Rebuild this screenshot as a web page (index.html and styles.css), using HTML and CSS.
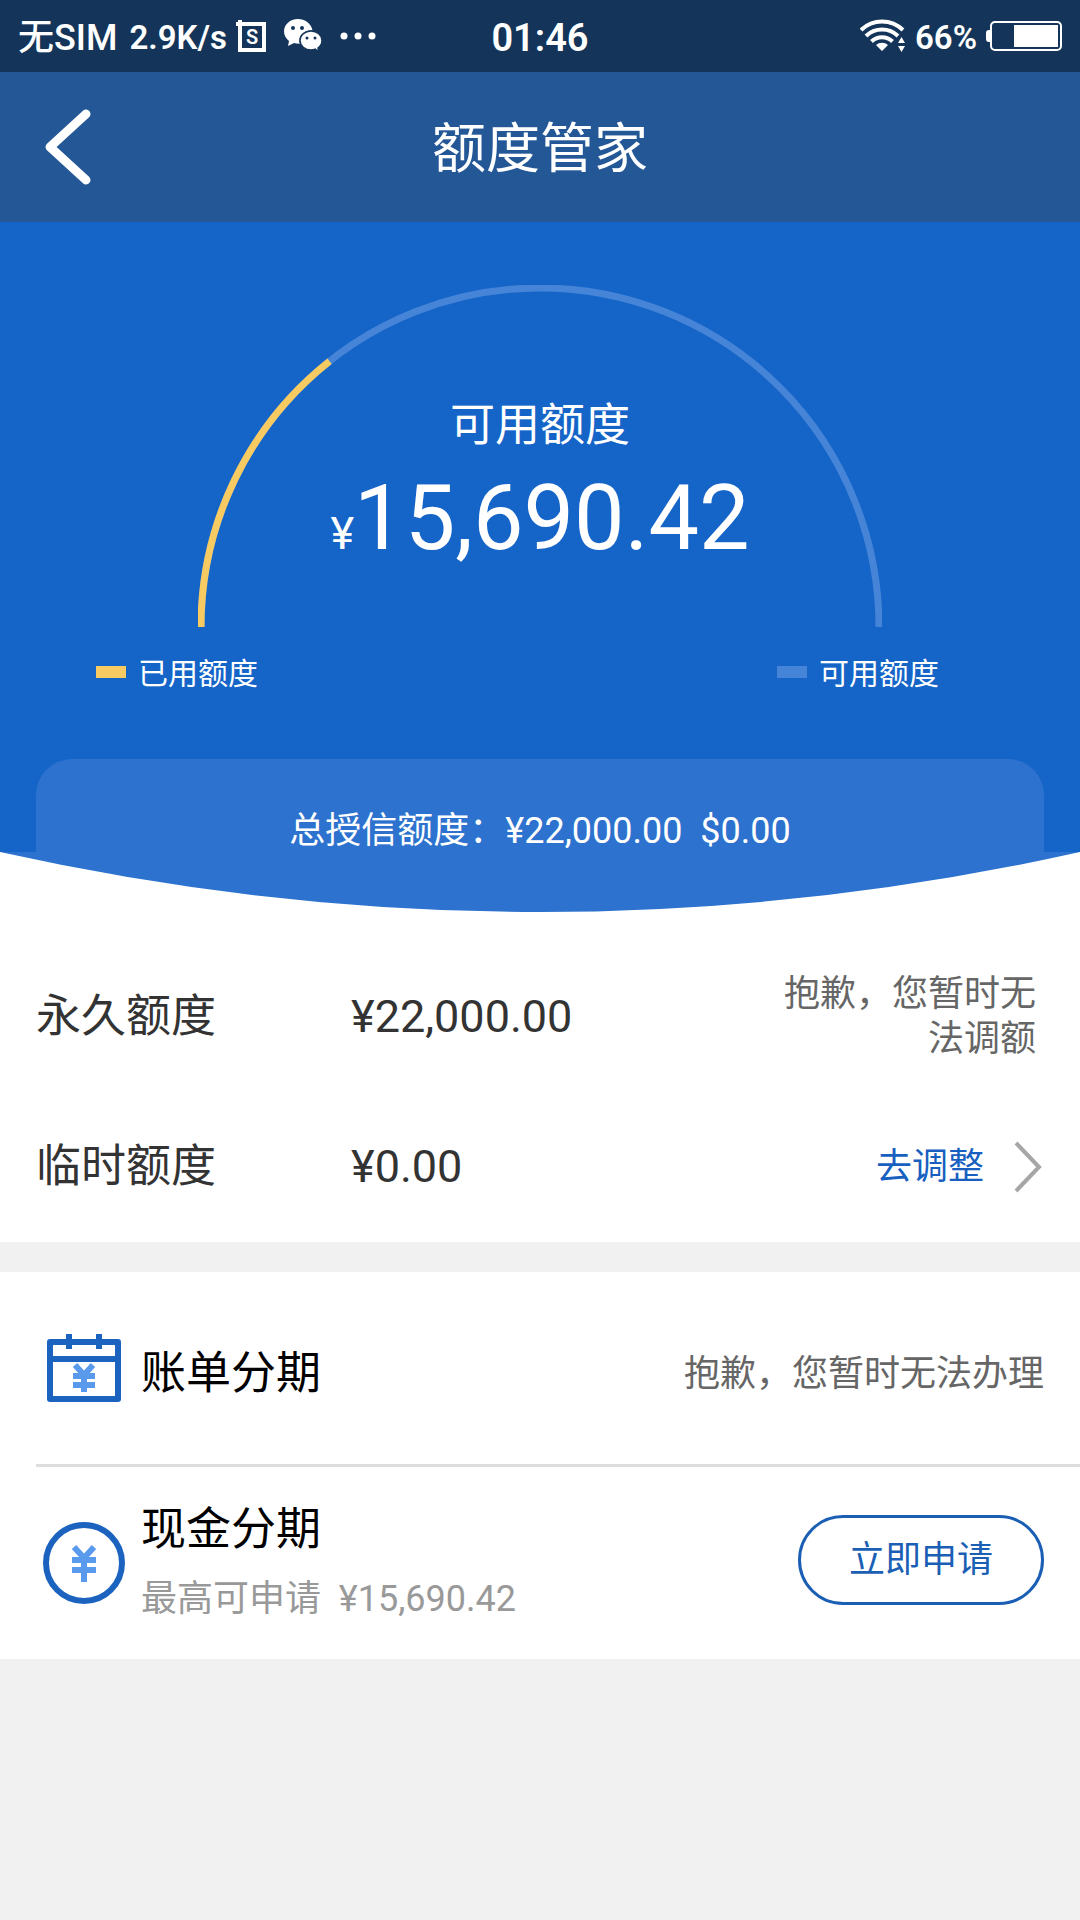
FILE: index.html
```html
<!DOCTYPE html>
<html lang="zh-CN">
<head>
<meta charset="utf-8">
<meta name="viewport" content="width=device-width">
<title>额度管家</title>
<link rel="stylesheet" href="styles.css">
</head>
<body>
<div class="status">
  <div class="status-side">
    <span class="carrier">无SIM</span>
    <span class="speed">2.9K/s</span>
    <svg class="icon-box" width="30" height="32" viewBox="0 0 30 32" aria-hidden="true">
      <path d="M4 0v4M0 4h28v26H4V2" fill="none" stroke="#fff" stroke-width="4"/>
      <text x="16" y="24" text-anchor="middle" class="box-letter">S</text>
    </svg>
    <svg class="icon-chat" width="38" height="34" viewBox="0 0 38 34" aria-hidden="true">
      <path fill="#fff" d="M14 0C6 0 0 5.500 0 12.500c0 4 2 7 5 9.500L4 27l6-3c2 .6 4 .8 6 .7-2.500-8 4-14 12.500-13.500C27 4.500 21 0 14 0z"/>
      <path fill="#fff" stroke="#143559" stroke-width="1.500" d="M27 12c-6 0-11 4.200-11 9.500s5 9.500 11 9.500c1.600 0 3-.3 4.300-.8L35 33l-1-4c2.500-1.800 4-4.200 4-7.500 0-5.300-5-9.500-11-9.500z"/>
      <g fill="#143559"><circle cx="9" cy="9" r="2"/><circle cx="18" cy="9" r="2"/><circle cx="23" cy="19" r="1.500"/><circle cx="31" cy="19" r="1.500"/></g>
    </svg>
    <svg class="icon-dots" width="36" height="8" viewBox="0 0 36 8" aria-hidden="true">
      <g fill="#fff"><circle cx="4" cy="4" r="3.500"/><circle cx="18" cy="4" r="3.500"/><circle cx="32" cy="4" r="3.500"/></g>
    </svg>
  </div>
  <span class="clock">01:46</span>
  <div class="status-side status-right">
    <svg width="46" height="34" viewBox="0 0 46 34" aria-hidden="true">
      <g fill="none" stroke="#fff" stroke-width="4">
        <path d="M1 11a30 30 0 0 1 42 0"/>
        <path d="M6 17a23 23 0 0 1 32 0"/>
        <path d="M11.500 22.500a15 15 0 0 1 21 0"/>
      </g>
      <path fill="#fff" d="M22 32l-6-6a9 9 0 0 1 12 0zM41.500 18l3.500 6h-7zM41.500 33l3.500-6h-7z"/>
    </svg>
    <span class="speed percent">66%</span>
    <svg width="76" height="30" viewBox="0 0 76 30" aria-hidden="true">
      <rect x="5" y="1" width="70" height="28" rx="4" fill="none" stroke="#fff" stroke-width="2"/>
      <path fill="#fff" d="M4 9H3a3 3 0 0 0-3 3v6a3 3 0 0 0 3 3h1zM28 4h44v22H28z"/>
    </svg>
  </div>
</div>

<header class="header">
  <button class="back" type="button" aria-label="返回">
    <svg width="46" height="76" viewBox="0 0 46 76"><path d="M41 5L5 38l36 33" fill="none" stroke="#fff" stroke-width="9" stroke-linecap="round" stroke-linejoin="round"/></svg>
  </button>
  <h1 class="title">额度管家</h1>
</header>

<main>
  <section class="hero">
    <div class="gauge">
      <svg class="gauge-arc" viewBox="0 0 684 342" aria-hidden="true">
        <path class="arc" stroke="#4584d6" d="M3 342a339 339 0 0 1 678 0"/>
        <path class="arc" stroke="#f8cb62" d="M3 342a339 339 0 0 1 678 0" pathLength="22000" stroke-dasharray="6310 22000"/>
      </svg>
      <div class="gauge-text">
        <div class="gauge-label">可用额度</div>
        <div class="gauge-amount"><span class="yuan">¥</span>15,690.42</div>
      </div>
    </div>
    <div class="legend">
      <div class="legend-item"><i class="swatch swatch-used"></i>已用额度</div>
      <div class="legend-item"><i class="swatch swatch-free"></i>可用额度</div>
    </div>
    <div class="total">总授信额度：¥22,000.00&nbsp; $0.00</div>
  </section>
  <svg class="curve" viewBox="0 0 1080 60" preserveAspectRatio="none" aria-hidden="true"><path fill="#2c72ce" d="M0 0Q540 120 1080 0z"/></svg>

  <section class="limits">
    <div class="limit">
      <span>永久额度</span>
      <span>¥22,000.00</span>
      <span class="note note-wrap">抱歉，您暂时无法调额</span>
    </div>
    <div class="limit">
      <span>临时额度</span>
      <span>¥0.00</span>
      <a class="adjust" href="#">去调整
        <svg width="30" height="52" viewBox="0 0 30 52" aria-hidden="true"><path d="M2 2l23 24L2 50" fill="none" stroke="#a6a6a6" stroke-width="4"/></svg>
      </a>
    </div>
  </section>

  <section class="plans">
    <div class="plan plan-single">
      <svg class="plan-icon" viewBox="0 6 84 84" aria-hidden="true">
        <path fill="none" stroke="#1c63c0" stroke-width="6" stroke-linejoin="round" d="M8 16h68v57H8zM8 33h68M27 8v15M57 8v15"/>
        <path fill="none" stroke="#5a9aec" stroke-width="6" d="M33 39l9 10 9-10M42 48v18M31 50h22M31 59h22"/>
      </svg>
      <div class="plan-text"><div class="plan-name">账单分期</div></div>
      <span class="note">抱歉，您暂时无法办理</span>
    </div>
    <div class="plan">
      <svg class="plan-icon" viewBox="0 0 84 84" aria-hidden="true">
        <circle cx="42" cy="42" r="38" fill="none" stroke="#1c63c0" stroke-width="6"/>
        <path fill="none" stroke="#5a9aec" stroke-width="6" d="M32 26l10 11 10-11M42 35v26M30 39h24M30 49h24"/>
      </svg>
      <div class="plan-text">
        <div class="plan-name">现金分期</div>
        <div class="plan-sub">最高可申请&nbsp; ¥15,690.42</div>
      </div>
      <button class="apply" type="button">立即申请</button>
    </div>
  </section>
</main>
</body>
</html>
```

FILE: styles.css
```css
* { box-sizing: border-box; }

body {
  margin: 0;
  min-height: 100vh;
  background: #f1f1f1;
  color: #333;
  font-family: Roboto, "Noto Sans CJK SC", sans-serif;
  font-size: 45px;
  line-height: 60px;
}

svg { display: block; flex: none; }
button { font: inherit; background: none; border: 0; padding: 0; cursor: pointer; }

/* Status bar */
.status {
  display: grid;
  grid-template-columns: 1fr auto 1fr;
  align-items: center;
  height: 72px;
  padding: 0 18px;
  background: #143559;
  color: #fff;
  font-weight: 600;
}
.status span { padding-top: 3px; }
.status-side { display: flex; align-items: center; }
.status-right { justify-content: flex-end; }
.carrier { font-size: 36px; font-weight: 500; }
.speed { font-size: 33px; margin-left: 12px; }
.percent { margin: 0 9px; }
.clock { font-size: 38px; }
.icon-box { margin-left: 9px; }
.box-letter { font-size: 20px; fill: #fff; }
.icon-chat { margin-left: 18px; }
.icon-dots { margin-left: 18px; }

/* Title bar */
.header {
  display: grid;
  grid-template-columns: 1fr auto 1fr;
  align-items: center;
  height: 150px;
  padding: 0 45px;
  background: #235796;
  color: #fff;
}
.back { justify-self: start; }
.title { margin: 0; padding-top: 6px; font-size: 54px; font-weight: 400; }

/* Gauge */
.hero {
  padding: 63px 36px 0;
  background: #1564c8;
  color: #fff;
}
.gauge { position: relative; max-width: 684px; margin: 0 auto; }
.gauge-arc { width: 100%; height: auto; }
.arc { fill: none; stroke-width: 7; }
.gauge-text {
  position: absolute;
  inset: 0;
  padding-top: 111px;
  text-align: center;
}
.gauge-amount { margin-top: 3px; font-size: 90px; line-height: 120px; }
.yuan { font-size: 45px; }

.legend {
  display: grid;
  grid-template-columns: 681px 1fr;
  padding: 24px 60px 63px;
  font-size: 30px;
  line-height: 45px;
}
.legend-item { display: flex; align-items: center; gap: 12px; white-space: nowrap; }
.swatch { width: 30px; height: 12px; margin-bottom: 3px; }
.swatch-used { background: #f8cb62; }
.swatch-free { background: #4584d6; }

.total {
  padding-top: 50px;
  height: 93px;
  border-radius: 36px 36px 0 0;
  background: #2c72ce;
  font-size: 36px;
  line-height: 45px;
  text-align: center;
}
.curve { width: 100%; height: 60px; background: #fff; }

/* Credit limits */
.limits { padding: 30px 36px 0; background: #fff; }
.limit {
  display: grid;
  grid-template-columns: 315px 1fr auto;
  align-items: center;
  height: 150px;
}
.note { color: #666; font-size: 36px; line-height: 45px; }
.note-wrap { width: 260px; margin-right: 8px; text-align: right; }
.adjust {
  display: flex;
  align-items: center;
  gap: 30px;
  color: #1860c0;
  font-size: 36px;
  text-decoration: none;
}

/* Instalment plans */
.plans { margin-top: 30px; padding-left: 36px; background: #fff; }
.plan {
  display: flex;
  align-items: center;
  height: 192px;
  padding-right: 36px;
}
.plan-single { padding-top: 12px; }
.plan + .plan { height: 195px; border-top: 3px solid #ddd; }
.plan-icon { width: 84px; height: 84px; margin: 0 15px 0 6px; }
.plan-text { flex: 1; }
.plan-name { color: #000; }
.plan-sub { margin-top: 12px; color: #999; font-size: 36px; line-height: 54px; }
.apply {
  width: 246px;
  height: 90px;
  margin-bottom: 6px;
  border: 3px solid #1b5fb5;
  border-radius: 45px;
  color: #1b5fb5;
  font-size: 36px;
}
```
